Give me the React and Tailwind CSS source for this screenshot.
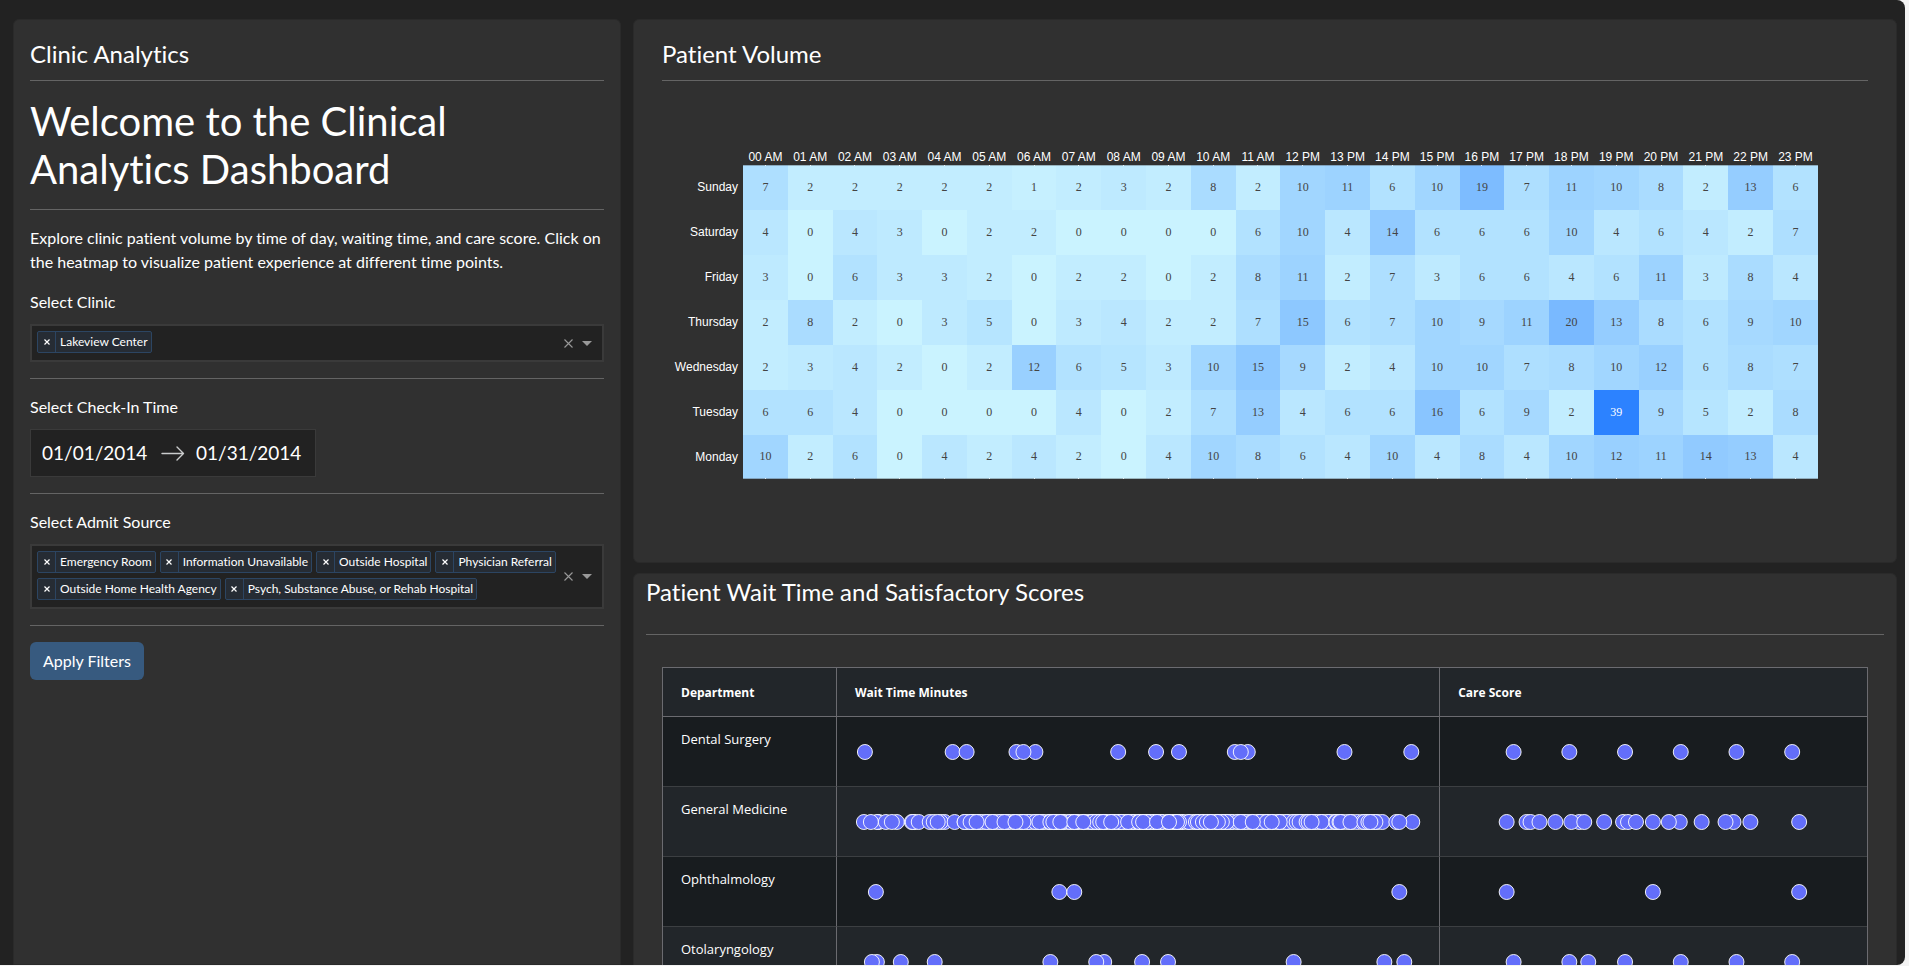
import React, { useState } from "react";

const HOURS = Array.from({ length: 24 }, (_, h) => `${String(h).padStart(2, "0")} ${h < 12 ? "AM" : "PM"}`);

const VOLUME = [
  ["Sunday", [7, 2, 2, 2, 2, 2, 1, 2, 3, 2, 8, 2, 10, 11, 6, 10, 19, 7, 11, 10, 8, 2, 13, 6]],
  ["Saturday", [4, 0, 4, 3, 0, 2, 2, 0, 0, 0, 0, 6, 10, 4, 14, 6, 6, 6, 10, 4, 6, 4, 2, 7]],
  ["Friday", [3, 0, 6, 3, 3, 2, 0, 2, 2, 0, 2, 8, 11, 2, 7, 3, 6, 6, 4, 6, 11, 3, 8, 4]],
  ["Thursday", [2, 8, 2, 0, 3, 5, 0, 3, 4, 2, 2, 7, 15, 6, 7, 10, 9, 11, 20, 13, 8, 6, 9, 10]],
  ["Wednesday", [2, 3, 4, 2, 0, 2, 12, 6, 5, 3, 10, 15, 9, 2, 4, 10, 10, 7, 8, 10, 12, 6, 8, 7]],
  ["Tuesday", [6, 6, 4, 0, 0, 0, 0, 4, 0, 2, 7, 13, 4, 6, 6, 16, 6, 9, 2, 39, 9, 5, 2, 8]],
  ["Monday", [10, 2, 6, 0, 4, 2, 4, 2, 0, 4, 10, 8, 6, 4, 10, 4, 8, 4, 10, 12, 11, 14, 13, 4]],
];

const LOW = [202, 243, 255];
const HIGH = [44, 130, 255];

function heat(value) {
  const t = value / 39;
  return `rgb(${LOW.map((c, i) => Math.round(c + (HIGH[i] - c) * t)).join(",")})`;
}

const range = (from, to, step) => {
  const out = [];
  for (let v = from; v <= to; v += step) out.push(v);
  return out;
};

/* Marker positions along each strip, in units of the strip's own span. */
const WAIT_SPAN = 604;
const CARE_SPAN = 429;

const DEPARTMENTS = [
  {
    name: "Dental Surgery",
    wait: [28, 116, 130, 180, 199, 187, 282, 320, 343, 399, 412, 405, 509, 576],
    care: [74, 130, 186, 242, 298, 354],
  },
  {
    name: "General Medicine",
    wait: [
      27, 42, 40, 34, 49, 60, 55, 75, 78, 76, 82, 93, 97, 108, 104, 101, 118, 128,
      ...range(132, 500, 5),
      ...range(136, 500, 7),
      ...range(502, 544, 5),
      128, 134, 140, 156, 168, 187, 179, 203, 214, 218, 225, 238, 258, 262, 268, 276,
      285, 279, 296, 309, 302, 320, 314, 334, 341, 217, 224, 238, 256, 260, 264, 267, 275,
      247, 292, 303, 311, 307, 321, 343, 341, 333, 362, 367, 371, 391, 386, 382, 375,
      405, 424, 431, 417, 444, 436, 461, 464, 471, 473, 486, 476, 501, 504, 505, 515,
      529, 533, 547, 540, 535, 561, 577, 564,
    ],
    care: [67, 87, 91, 100, 116, 140, 132, 145, 165, 184, 189, 197, 214, 241, 230, 263, 295, 287, 312, 361],
  },
  {
    name: "Ophthalmology",
    wait: [39, 223, 238, 564],
    care: [67, 214, 361],
  },
  {
    name: "Otolaryngology",
    wait: [40, 35, 64, 98, 214, 268, 260, 306, 332, 458, 549, 569],
    care: [74, 130, 149, 186, 242, 298, 354],
  },
];

function Strip({ points, span, label }) {
  return (
    <svg className="block h-[69px] w-full" role="img" aria-label={label}>
      {points.map((p, i) => (
        <circle key={i} cx={`${(p / span) * 100}%`} cy="35" r="7.5" fill="#636efa" stroke="#fff" strokeOpacity="0.9" strokeWidth="1" />
      ))}
    </svg>
  );
}

function Rule() {
  return <hr className="my-4 border-t border-[#646464]" />;
}

function MultiSelect({ id, label, initial }) {
  const [items, setItems] = useState(initial);
  return (
    <div>
      <label htmlFor={id} className="block leading-6">
        {label}
      </label>
      <div className="mt-2.5 flex items-center border-2 border-[#3a3a3a] bg-[#222]">
        <div className="flex min-w-0 flex-1 flex-wrap gap-x-1 gap-y-[5px] py-[5px] pb-[7px] pl-[5px]">
          {items.map((item) => (
            <span key={item} className="flex h-[22px] items-stretch rounded-xs border border-[#2c4562] bg-[#262c34] text-xs leading-5">
              <button
                type="button"
                aria-label={`Remove ${item}`}
                onClick={() => setItems(items.filter((i) => i !== item))}
                className="flex w-[18px] items-center justify-center border-r border-[#2c4562]"
              >
                <svg viewBox="0 0 6 6" className="size-[6px]" fill="none" stroke="#fff" strokeWidth="1.2">
                  <path d="M0.5 0.5 5.5 5.5M5.5 0.5 0.5 5.5" />
                </svg>
              </button>
              <span className="whitespace-nowrap pl-1 pr-[3px]">{item}</span>
            </span>
          ))}
          <input id={id} type="text" className="h-[22px] w-1 bg-transparent outline-none" />
        </div>
        <button type="button" aria-label={`Clear ${label}`} onClick={() => setItems([])} className="flex w-[17px] justify-center">
          <svg viewBox="0 0 9 9" className="size-[9px]" fill="none" stroke="#999" strokeWidth="1.1">
            <path d="M0.5 0.5 8.5 8.5M8.5 0.5 0.5 8.5" />
          </svg>
        </button>
        <button type="button" aria-label={`Open ${label}`} className="mr-[6px] flex w-[19px] justify-center">
          <svg viewBox="0 0 10 5" className="h-[5px] w-[10px]" fill="#999">
            <path d="M0 0h10L5 5z" />
          </svg>
        </button>
      </div>
    </div>
  );
}

function DateRange() {
  return (
    <fieldset>
      <legend className="leading-6">Select Check-In Time</legend>
      <div className="mt-2.5 inline-flex h-12 items-center border border-[#3a3a3a] bg-[#222] pl-[11px] text-[19px] align-top">
        <input type="text" aria-label="Start date" defaultValue="01/01/2014" className="w-[119px] bg-transparent outline-none" />
        <svg viewBox="0 0 24 16" className="h-4 w-6" fill="none" stroke="#cacccd" strokeWidth="1.4" strokeLinecap="round" strokeLinejoin="round">
          <path d="M1 8.5h21.5M16 2l6.5 6.5L16 15" />
        </svg>
        <input type="text" aria-label="End date" defaultValue="01/31/2014" className="ml-[11px] w-[119px] bg-transparent outline-none" />
      </div>
    </fieldset>
  );
}

function Filters() {
  return (
    <section className="w-[608px] shrink-0 rounded-t-md border border-[#2a2a2a] bg-[#303030] px-4 pb-4 pt-5">
      <h5 className="-mb-1 text-2xl leading-7">Clinic Analytics</h5>
      <Rule />
      <h1 className="text-[40px] leading-12">Welcome to the Clinical Analytics Dashboard</h1>
      <Rule />
      <p className="mb-4 leading-6">
        Explore clinic patient volume by time of day, waiting time, and care score. Click on the heatmap to visualize patient experience at
        different time points.
      </p>
      <MultiSelect id="clinic" label="Select Clinic" initial={["Lakeview Center"]} />
      <Rule />
      <DateRange />
      <Rule />
      <MultiSelect
        id="admit"
        label="Select Admit Source"
        initial={[
          "Emergency Room",
          "Information Unavailable",
          "Outside Hospital",
          "Physician Referral",
          "Outside Home Health Agency",
          "Psych, Substance Abuse, or Rehab Hospital",
        ]}
      />
      <Rule />
      <button type="button" className="rounded-md bg-[#375a7f] px-[13px] py-[7px] leading-6">
        Apply Filters
      </button>
    </section>
  );
}

function Heatmap() {
  const last = VOLUME.length - 1;
  return (
    <div className="pr-[50px] pt-[50px]">
      <table className="w-full table-fixed border-separate border-spacing-0 font-['Liberation_Sans',sans-serif] text-xs">
        <thead>
          <tr className="h-[18px]">
            <td className="w-[81px] p-0" />
            {HOURS.map((h) => (
              <th key={h} scope="col" className="whitespace-nowrap p-0 pt-[2px] text-center font-normal leading-4">
                {h}
              </th>
            ))}
          </tr>
        </thead>
        <tbody>
          {VOLUME.map(([day, values], r) => (
            <tr key={day} className={r === last ? "h-11" : "h-[45px]"}>
              <th scope="row" className="p-0 pb-px pr-[5px] text-right font-normal">
                {day}
              </th>
              {values.map((v, i) => (
                <td
                  key={i}
                  style={{ backgroundColor: heat(v) }}
                  className={`relative cursor-pointer p-0 pb-[2px] text-center font-['Liberation_Serif',serif] ${v > 30 ? "text-white" : "text-[#444]"}`}
                >
                  {v}
                  {(r === 0 || r === last) && (
                    <span className={`absolute inset-x-0 flex h-px justify-center bg-[#444]/35 ${r === 0 ? "top-0" : "bottom-0"}`}>
                      <span className="w-px bg-white/80" />
                    </span>
                  )}
                </td>
              ))}
            </tr>
          ))}
        </tbody>
      </table>
    </div>
  );
}

function Scores() {
  return (
    <table className="w-full table-fixed border-separate border-spacing-0 border border-[#6b6b70] font-['Open_Sans',sans-serif] text-[13px]">
      <thead>
        <tr className="h-[49px] bg-[#22262a] text-left text-xs">
          <th className="w-[174px] border-b border-r border-[#6b6b70] px-[18px] pt-[2px] font-bold">Department</th>
          <th className="w-[50.1%] border-b border-r border-[#6b6b70] px-[18px] pt-[2px] font-bold">Wait Time Minutes</th>
          <th className="border-b border-[#6b6b70] px-[18px] pt-[2px] font-bold">Care Score</th>
        </tr>
      </thead>
      <tbody>
        {DEPARTMENTS.map((d) => (
          <tr key={d.name} className="h-[70px] odd:bg-[#181c1f] even:bg-[#22262a]">
            <th scope="row" className="border-b border-r border-b-[#3c3f42] border-r-[#6b6b70] px-[18px] pt-3 text-left align-top font-normal leading-5">
              {d.name}
            </th>
            <td className="border-b border-r border-b-[#3c3f42] border-r-[#6b6b70] p-0">
              <Strip points={d.wait} span={WAIT_SPAN} label={`${d.name} wait times`} />
            </td>
            <td className="border-b border-[#3c3f42] p-0">
              <Strip points={d.care} span={CARE_SPAN} label={`${d.name} care scores`} />
            </td>
          </tr>
        ))}
      </tbody>
    </table>
  );
}

export default function App() {
  return (
    <div className="h-screen bg-[#f3f3f3] pb-px pr-1 font-['Lato',sans-serif] text-base text-white [font-variant-ligatures:no-common-ligatures]">
      <main className="flex h-full gap-3 overflow-hidden rounded-r-lg bg-[#222] pl-[13px] pr-2 pt-[19px]">
        <Filters />
        <div className="flex min-w-0 flex-1 flex-col gap-2.5">
          <section className="shrink-0 rounded-md border border-[#2a2a2a] bg-[#303030] px-7 pb-[83px] pt-5">
            <h5 className="-mb-1 text-2xl leading-7">Patient Volume</h5>
            <Rule />
            <Heatmap />
          </section>
          <section className="shrink-0 rounded-t-md border border-[#2a2a2a] bg-[#303030] px-3 pb-4">
            <h5 className="mb-7 mt-1 text-2xl leading-7">Patient Wait Time and Satisfactory Scores</h5>
            <hr className="border-t border-[#646464]" />
            <div className="mx-4 mt-8">
              <Scores />
            </div>
          </section>
        </div>
      </main>
    </div>
  );
}
